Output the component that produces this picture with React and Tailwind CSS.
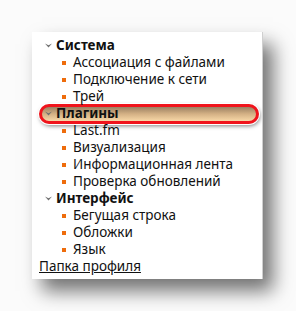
import React from "react";

const Bullet = () => <span className="w-[4px] h-[4px] bg-[#ee6c0c] shrink-0 mr-[7px]" />;

const Arrow = () => (
  <svg width="7" height="5" viewBox="0 0 7 5" className="mr-[4px] shrink-0">
    <path d="M0 0.5 L3.5 4.5 L7 0.5 L3.5 2.2 Z" fill="#6f6f6f" />
  </svg>
);

function Item({ children }) {
  return (
    <div className="h-[17px] flex items-center pl-[30px]">
      <Bullet />
      <span>{children}</span>
    </div>
  );
}

function Group({ children }) {
  return (
    <div className="h-[17px] flex items-center pl-[13px] font-bold">
      <Arrow />
      <span>{children}</span>
    </div>
  );
}

export default function App() {
  return (
    <div
      className="w-[296px] h-[311px] bg-[#fbfbfb] overflow-hidden pt-[32px] pl-[32px] text-[13.5px] leading-none text-[#111]"
      style={{ fontFamily: '"Noto Sans", "Open Sans", sans-serif' }}
    >
      <div className="w-[231px] h-[247px] bg-white border-r border-[#cfcfcf] shadow-[10px_12px_18px_rgba(0,0,0,0.55)] overflow-hidden pt-[5px]">
        <Group>Система</Group>
        <Item>Ассоциация с файлами</Item>
        <Item>Подключение к сети</Item>
        <Item>Трей</Item>

        {/* highlighted row */}
        <div className="h-[20px] -my-[1.5px] pl-[7px]">
          <div className="w-[220px] h-[20px] rounded-full border-[3px] border-[#f0141c] ring-1 ring-white shadow-[1px_2px_4px_rgba(0,0,0,0.5)] bg-gradient-to-b from-[#9b8062] via-[#d4b185] to-[#f7d7a7] flex items-center pl-[3px] font-bold">
            <Arrow />
            <span>Плагины</span>
          </div>
        </div>

        <Item>Last.fm</Item>
        <Item>Визуализация</Item>
        <Item>Информационная лента</Item>
        <Item>Проверка обновлений</Item>
        <Group>Интерфейс</Group>
        <Item>Бегущая строка</Item>
        <Item>Обложки</Item>
        <Item>Язык</Item>
        <div className="h-[18px] flex items-center pl-[7px]">
          <span className="underline">Папка профиля</span>
        </div>
      </div>
    </div>
  );
}
